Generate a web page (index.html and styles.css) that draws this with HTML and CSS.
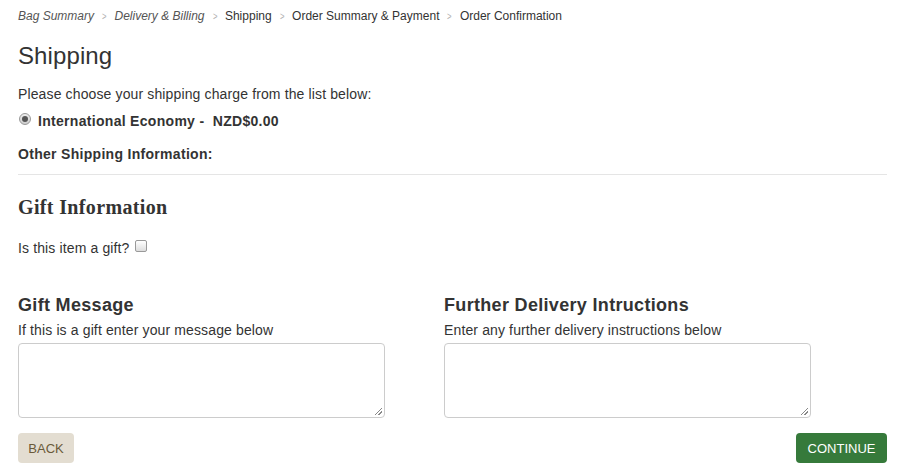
FILE: index.html
```html
<!DOCTYPE html>
<html>
<head>
<meta charset="utf-8">
<link rel="stylesheet" href="styles.css">
</head>
<body>
<div class="page">
  <nav class="crumbs">
    <span class="crumb done">Bag Summary</span><span class="sep">&gt;</span>
    <span class="crumb done">Delivery &amp; Billing</span><span class="sep">&gt;</span>
    <span class="crumb">Shipping</span><span class="sep">&gt;</span>
    <span class="crumb">Order Summary &amp; Payment</span><span class="sep">&gt;</span>
    <span class="crumb">Order Confirmation</span>
  </nav>
  <h1 class="title">Shipping</h1>
  <p class="intro">Please choose your shipping charge from the list below:</p>
  <label class="option"><span class="radio"><span class="dot"></span></span><b>International Economy - &nbsp;NZD$0.00</b></label>
  <p class="other">Other Shipping Information:</p>
  <hr class="rule">
  <h2 class="gift-title">Gift Information</h2>
  <label class="gift-q">Is this item a gift? <span class="check"></span></label>
  <div class="cols">
    <div class="col">
      <h3 class="col-title">Gift Message</h3>
      <p class="col-sub">If this is a gift enter your message below</p>
      <div class="area"><span class="grip"></span></div>
    </div>
    <div class="col">
      <h3 class="col-title">Further Delivery Intructions</h3>
      <p class="col-sub">Enter any further delivery instructions below</p>
      <div class="area"><span class="grip"></span></div>
    </div>
  </div>
  <div class="actions">
    <span class="btn back">BACK</span>
    <span class="btn continue">CONTINUE</span>
  </div>
</div>
</body>
</html>
```
FILE: styles.css
```css
* { box-sizing: border-box; }
html, body { margin: 0; padding: 0; background: #fff; }
body { font-family: "Liberation Sans", Arial, sans-serif; color: #333; font-size: 14px; letter-spacing: 0.13px; }
.page { padding: 7px 14px 0 18px; width: 901px; }
.crumbs { font-size: 12px; line-height: 18px; color: #333; display: flex; align-items: center; letter-spacing: 0; }
.crumb.done { font-style: italic; color: #555; }
.sep { color: #b0b0b0; margin: 0 7px; font-size: 11px; transform: scaleX(0.7); display: inline-block; }
.title { font-weight: normal; font-size: 24px; line-height: 28px; margin: 17px 0 0 0; color: #333; letter-spacing: 0.1px; }
.intro { margin: 14px 0 0 0; line-height: 20px; }
.option { display: flex; align-items: center; margin-top: 7px; line-height: 20px; }
.option b, .other { letter-spacing: 0.3px; }
.radio { width: 12px; height: 12px; border-radius: 50%; border: 1px solid #999; background: linear-gradient(#eee, #ccc); margin: 0 7px 0 1px; display: flex; align-items: center; justify-content: center; position: relative; top: -2px; }
.dot { width: 6px; height: 6px; border-radius: 50%; background: #555; }
.other { font-weight: bold; margin: 13px 0 0 0; line-height: 20px; }
.rule { border: 0; border-top: 1px solid #e5e5e5; margin: 10px 0 0 0; }
.gift-title { font-family: "Liberation Serif", "Times New Roman", serif; font-size: 20px; font-weight: bold; margin: 20px 0 0 0; line-height: 24px; letter-spacing: 0.35px; }
.gift-q { display: flex; align-items: center; margin-top: 19px; line-height: 20px; }
.check { display: inline-block; width: 12px; height: 12px; border: 1px solid #999; border-radius: 2px; background: linear-gradient(#fff, #ddd); margin-left: 5px; position: relative; top: -2px; }
.cols { display: grid; grid-template-columns: 426px 1fr; margin-top: 36px; }
.col-title { font-size: 18px; font-weight: bold; margin: 0; line-height: 22px; letter-spacing: 0.32px; }
.col-sub { margin: 4px 0 0 0; line-height: 20px; }
.area { width: 367px; height: 75px; border: 1px solid #ccc; border-radius: 4px; margin-top: 3px; position: relative; }
.grip { position: absolute; right: 2px; bottom: 2px; width: 7px; height: 7px; background: linear-gradient(135deg, transparent 45%, #888 45%, #888 55%, transparent 55%, transparent 70%, #888 70%, #888 80%, transparent 80%); }
.actions { display: flex; justify-content: space-between; margin-top: 15px; }
.btn { display: inline-flex; align-items: center; justify-content: center; height: 30px; border-radius: 4px; font-size: 13px; letter-spacing: 0; }
.back { width: 56px; background: #e3ddd1; color: #6a5a3a; }
.continue { width: 91px; background: #367a3b; color: #fff; }
```
